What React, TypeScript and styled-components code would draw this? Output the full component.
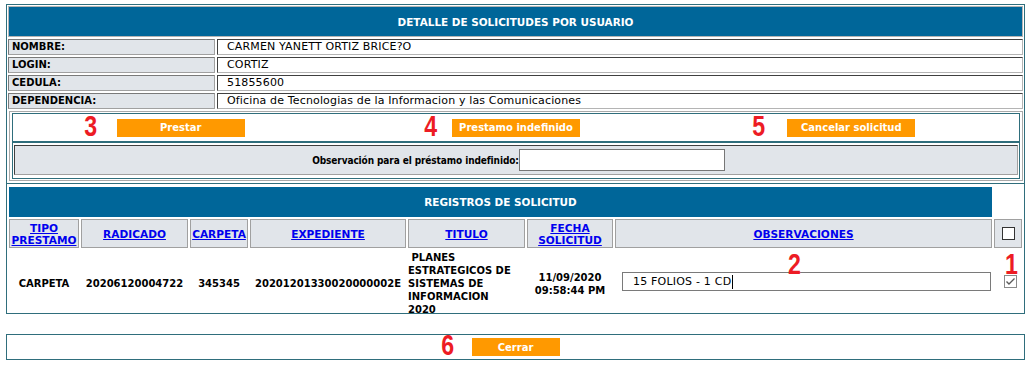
import React from "react";
import styled, { createGlobalStyle } from "styled-components";

const teal = "#2f6e7c";
const blue = "#006699";
const panelGrey = "#e1e5ea";
const orange = "#ff9900";
const red = "#ed1c24";

const GlobalStyle = createGlobalStyle`
  html, body { margin: 0; padding: 0; background: #fff; }
  body {
    font-family: "DejaVu Sans", Verdana, sans-serif;
    font-size: 10px;
    color: #000;
  }
  * { box-sizing: border-box; }
`;

const Page = styled.div`
  padding: 4px 0 0 6px;
  width: 1028px;
`;

const Frame = styled.div`
  width: 1019px;
  border: 1px solid ${teal};
`;

const DetailSection = styled.section`
  display: flex;
  flex-direction: column;
  gap: 2px;
  padding: 1px 1px 2px;
`;

const TitleBar = styled.div<{ $bordered?: boolean; $span?: number }>`
  height: ${(p) => (p.$bordered ? 31 : 30)}px;
  background: ${blue};
  border: ${(p) => (p.$bordered ? "1px solid #b4b4b4" : "none")};
  color: #fff;
  font-size: 10.45px;
  font-weight: bold;
  display: flex;
  align-items: center;
  justify-content: center;
  grid-column: ${(p) => (p.$span ? `1 / span ${p.$span}` : "auto")};
`;

const InfoRow = styled.div`
  display: grid;
  grid-template-columns: 207px 1fr;
  gap: 2px;
  height: 16px;
`;

const InfoLabel = styled.div`
  background: ${panelGrey};
  border: 1px solid;
  border-color: #7a7a7a #a0a0a0 #a0a0a0 #7a7a7a;
  font-weight: bold;
  padding-left: 3px;
  line-height: 14px;
`;

const InfoValue = styled.div`
  background: #fff;
  border: 1px solid;
  border-color: #404040 #b4b4b4 #b4b4b4 #404040;
  padding-left: 9px;
  font-size: 11px;
  letter-spacing: 0.15px;
  line-height: 14px;
`;

const ButtonPanel = styled.div`
  margin-left: 1px;
  border: 1px solid #a9a9a9;
  padding: 1px 2px;
`;

const TealBox = styled.div`
  border: 1px solid ${teal};
`;

const ActionRow = styled.div`
  display: grid;
  grid-template-columns: repeat(3, 1fr);
  align-items: center;
  justify-items: center;
  height: 29px;
  border-bottom: 2px solid ${teal};
`;

const ActionSlot = styled.div`
  position: relative;
  display: flex;
`;

const OrangeButton = styled.button<{ $w: number }>`
  width: ${(p) => p.$w}px;
  height: 18px;
  padding: 0;
  border: none;
  background: ${orange};
  color: #fff;
  font-family: "DejaVu Sans", Verdana, sans-serif;
  font-size: 10px;
  font-weight: bold;
  cursor: pointer;
`;

const Annotation = styled.span<{ $gap: number }>`
  position: absolute;
  right: calc(100% + ${(p) => p.$gap}px);
  top: 50%;
  transform: translateY(-55%) scaleX(0.8);
  transform-origin: right center;
  font-family: "Liberation Sans", Arial, sans-serif;
  font-size: 29px;
  line-height: 1;
  font-weight: bold;
  color: ${red};
`;

const CellAnnotation = styled.span<{ $left: number }>`
  position: absolute;
  left: ${(p) => p.$left}px;
  top: 0;
  transform: scaleX(0.8);
  transform-origin: left top;
  font-family: "Liberation Sans", Arial, sans-serif;
  font-size: 29px;
  line-height: 1;
  font-weight: bold;
  color: ${red};
`;

const ObsWrap = styled.div`
  padding: 2px 1px 3px;
`;

const ObsBox = styled.div`
  height: 30px;
  background: ${panelGrey};
  border: 1px solid;
  border-color: #404040 #a0a0a0 #a0a0a0 #404040;
  display: flex;
  align-items: center;
  justify-content: center;
  padding-left: 5px;
`;

const ObsLabel = styled.label`
  font-family: "DejaVu Sans Condensed", "DejaVu Sans", sans-serif;
  font-stretch: condensed;
  font-weight: bold;
  letter-spacing: -0.1px;
`;

const ObsInput = styled.input`
  width: 206px;
  height: 22px;
  border: 1px solid #767676;
  background: #fff;
  margin: 0;
  padding: 0 3px;
  font-family: "DejaVu Sans", Verdana, sans-serif;
  font-size: 11px;
`;

const RecordsSection = styled.section`
  border-top: 1px solid ${teal};
  padding: 3px 0 0 2px;
  display: grid;
  grid-template-columns: 70px 107px 58px 156px 117px 86px 377px 28px;
  grid-template-rows: 30px 29px 63px;
  gap: 2px;
`;

const HeadCell = styled.div`
  grid-row: 2;
  background: ${panelGrey};
  border: 1px solid #a0a0a0;
  display: flex;
  align-items: center;
  justify-content: center;
  text-align: center;
  line-height: 12px;
`;

const HeadLink = styled.a`
  color: #0000ee;
  font-size: 10.6px;
  font-weight: bold;
  text-decoration: underline;
  cursor: pointer;
`;

const DataCell = styled.div<{ $align?: "center" | "left"; $padLeft?: number; $text?: boolean }>`
  grid-row: 3;
  position: relative;
  display: flex;
  align-items: center;
  justify-content: ${(p) => (p.$align === "left" ? "flex-start" : "center")};
  text-align: ${(p) => (p.$align === "left" ? "left" : "center")};
  padding-left: ${(p) => p.$padLeft ?? 0}px;
  padding-top: ${(p) => (p.$text ? 4 : 0)}px;
  font-weight: bold;
  line-height: 13px;
  white-space: nowrap;
`;

const FilledField = styled.div`
  width: 369px;
  height: 19px;
  margin-left: 7px;
  border: 1px solid #7a7a7a;
  background: #fff;
  display: flex;
  align-items: center;
  padding-left: 10px;
  font-size: 11px;
  letter-spacing: 0.2px;
  font-weight: normal;
`;

const Caret = styled.span`
  width: 1px;
  height: 14px;
  background: #000;
  margin-left: 1px;
`;

const CheckBox = styled.span<{ $checked?: boolean }>`
  width: 13px;
  height: 13px;
  border: 1px solid ${(p) => (p.$checked ? "#8a8a8a" : "#333")};
  background: #fff;
  display: inline-flex;
  align-items: center;
  justify-content: center;
`;

const Footer = styled.div`
  margin-top: 20px;
  width: 1019px;
  height: 26px;
  border: 1px solid ${teal};
  display: flex;
  align-items: center;
  justify-content: center;
`;

const info: [string, string][] = [
  ["NOMBRE:", "CARMEN YANETT ORTIZ BRICE?O"],
  ["LOGIN:", "CORTIZ"],
  ["CEDULA:", "51855600"],
  ["DEPENDENCIA:", "Oficina de Tecnologias de la Informacion y las Comunicaciones"],
];

const actions = [
  { n: "3", label: "Prestar", gap: 20 },
  { n: "4", label: "Prestamo indefinido", gap: 15 },
  { n: "5", label: "Cancelar solicitud", gap: 22 },
];

export default function App() {
  return (
    <>
      <GlobalStyle />
      <Page>
        <Frame>
          <DetailSection>
            <TitleBar $bordered>DETALLE DE SOLICITUDES POR USUARIO</TitleBar>
            {info.map(([k, v]) => (
              <InfoRow key={k}>
                <InfoLabel>{k}</InfoLabel>
                <InfoValue>{v}</InfoValue>
              </InfoRow>
            ))}
            <ButtonPanel>
              <TealBox>
                <ActionRow>
                  {actions.map((a) => (
                    <ActionSlot key={a.n}>
                      <Annotation $gap={a.gap}>{a.n}</Annotation>
                      <OrangeButton $w={128}>{a.label}</OrangeButton>
                    </ActionSlot>
                  ))}
                </ActionRow>
                <ObsWrap>
                  <ObsBox>
                    <ObsLabel htmlFor="obs">Observación para el préstamo indefinido:</ObsLabel>
                    <ObsInput id="obs" type="text" />
                  </ObsBox>
                </ObsWrap>
              </TealBox>
            </ButtonPanel>
          </DetailSection>
          <RecordsSection>
            <TitleBar $span={7}>REGISTROS DE SOLICITUD</TitleBar>
            <HeadCell>
              <HeadLink>
                TIPO
                <br />
                PRESTAMO
              </HeadLink>
            </HeadCell>
            <HeadCell>
              <HeadLink>RADICADO</HeadLink>
            </HeadCell>
            <HeadCell>
              <HeadLink>CARPETA</HeadLink>
            </HeadCell>
            <HeadCell>
              <HeadLink>EXPEDIENTE</HeadLink>
            </HeadCell>
            <HeadCell>
              <HeadLink>TITULO</HeadLink>
            </HeadCell>
            <HeadCell>
              <HeadLink>
                FECHA
                <br />
                SOLICITUD
              </HeadLink>
            </HeadCell>
            <HeadCell>
              <HeadLink>OBSERVACIONES</HeadLink>
            </HeadCell>
            <HeadCell>
              <CheckBox />
            </HeadCell>

            <DataCell $text>CARPETA</DataCell>
            <DataCell $text>20206120004722</DataCell>
            <DataCell $text>345345</DataCell>
            <DataCell $text>20201201330020000002E</DataCell>
            <DataCell $text $align="left">
              {"\u00a0PLANES"}
              <br />
              ESTRATEGICOS DE
              <br />
              SISTEMAS DE
              <br />
              INFORMACION
              <br />
              2020
            </DataCell>
            <DataCell $text>
              11/09/2020
              <br />
              09:58:44 PM
            </DataCell>
            <DataCell $align="left">
              <CellAnnotation $left={173}>2</CellAnnotation>
              <FilledField>
                15 FOLIOS - 1 CD
                <Caret />
              </FilledField>
            </DataCell>
            <DataCell $padLeft={4}>
              <CellAnnotation $left={11}>1</CellAnnotation>
              <CheckBox $checked>
                <svg width="11" height="11" viewBox="0 0 11 11">
                  <polyline points="1.5,5.5 4,8 9.5,2.5" fill="none" stroke="#5a5a5a" strokeWidth="1.4" />
                </svg>
              </CheckBox>
            </DataCell>
          </RecordsSection>
        </Frame>
        <Footer>
          <ActionSlot>
            <Annotation $gap={17}>6</Annotation>
            <OrangeButton $w={88}>Cerrar</OrangeButton>
          </ActionSlot>
        </Footer>
      </Page>
    </>
  );
}
